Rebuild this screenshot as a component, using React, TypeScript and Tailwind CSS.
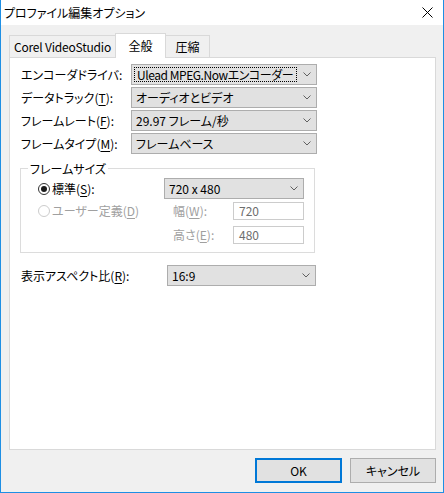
import React from 'react';

const font = "font-['Noto_Sans_CJK_JP','Noto_Sans',sans-serif] [font-feature-settings:'palt']";

const Chevron = () => (
  <svg width="8" height="5" viewBox="0 0 8 5" className="shrink-0">
    <path d="M0.5 0.5 L4 4 L7.5 0.5" fill="none" stroke="#606060" strokeWidth="1" />
  </svg>
);

// accelerator letter, underlined like a Win32 label
const Acc = ({ k }: { k: string }) => (
  <>
    (<span className="underline underline-offset-2">{k}</span>)
  </>
);

const Select = ({
  value,
  width,
  focused,
}: {
  value: string;
  width: string;
  focused?: boolean;
}) => (
  <div
    className={`${width} h-[21px] shrink-0 flex items-center justify-between border border-[#adadad] bg-[#e1e1e1] pr-[5px]`}
  >
    {focused ? (
      <div className="ml-[2px] h-[15px] w-[163px] border border-dotted border-black flex items-center pl-[2px] pt-[1px] leading-none tracking-[-0.45px] whitespace-nowrap overflow-hidden">
        {value}
      </div>
    ) : (
      <span className="pl-[4px] leading-none">{value}</span>
    )}
    <Chevron />
  </div>
);

const Row = ({ label, children }: { label: React.ReactNode; children: React.ReactNode }) => (
  <div className="flex items-center h-[21px] mb-[2px]">
    <div className="w-[110px] shrink-0 leading-none">{label}</div>
    {children}
  </div>
);

const TextBox = ({ value }: { value: string }) => (
  <div className="w-[71px] h-[18px] border border-[#cccccc] bg-white flex items-center pl-[5px] text-[#6d6d6d] leading-none">
    {value}
  </div>
);

export default function App() {
  return (
    <div
      className={`${font} w-[444px] h-[493px] bg-[#f0f0f0] border-x border-b border-[#1e8fe4] text-[12px] text-black flex flex-col overflow-hidden`}
    >
      {/* title bar */}
      <div className="h-[25px] shrink-0 bg-white flex items-center justify-between pl-[3px] pr-[10px]">
        <span className="leading-none">プロファイル編集オプション</span>
        <svg width="11" height="11" viewBox="0 0 11 11">
          <path d="M0.5 0.5 L10.5 10.5 M10.5 0.5 L0.5 10.5" stroke="#000" strokeWidth="1" />
        </svg>
      </div>

      {/* tabs */}
      <div className="flex items-end h-[24px] mt-[8px] ml-[8px]">
        <div className="w-[107px] h-[22px] border border-b-0 border-[#d9d9d9] bg-[#f0f0f0] flex items-center justify-center leading-none pt-[1px] tracking-[-0.2px]">
          Corel VideoStudio
        </div>
        <div className="relative z-10 -mb-px -ml-px w-[51px] h-[25px] border border-b-0 border-[#d9d9d9] bg-white flex items-start justify-center pt-[6px] leading-none">
          全般
        </div>
        <div className="-ml-px w-[45px] h-[22px] border border-b-0 border-[#d9d9d9] bg-[#f0f0f0] flex items-center justify-center leading-none pt-[1px]">
          圧縮
        </div>
      </div>

      {/* panel */}
      <div className="ml-[8px] w-[427px] h-[393px] shrink-0 border border-[#d9d9d9] bg-white pt-[6px] pl-[11px]">
        <Row label="エンコーダドライバ:">
          <Select value="Ulead MPEG.Nowエンコーダー" width="w-[186px]" focused />
        </Row>
        <Row label={<>データトラック<Acc k="T" />:</>}>
          <Select value="オーディオとビデオ" width="w-[186px]" />
        </Row>
        <Row label={<>フレームレート<Acc k="F" />:</>}>
          <Select value="29.97 フレーム/秒" width="w-[186px]" />
        </Row>
        <Row label={<>フレームタイプ<Acc k="M" />:</>}>
          <Select value="フレームベース" width="w-[186px]" />
        </Row>

        {/* group box */}
        <div className="relative mt-[14px] -ml-px w-[295px] h-[85px] border border-[#dcdcdc] pt-[9px] pl-[17px]">
          <span className="absolute left-[7px] -top-[8px] bg-white px-[2px] leading-[16px]">フレームサイズ</span>

          <div className="flex items-center h-[21px]">
            <div className="w-[126px] flex items-center gap-[2px]">
              <span className="w-[12px] h-[12px] rounded-full border border-[#333333] bg-white flex items-center justify-center">
                <span className="w-[6px] h-[6px] rounded-full bg-[#1a1a1a]" />
              </span>
              <span className="leading-none">標準<Acc k="S" />:</span>
            </div>
            <Select value="720 x 480" width="w-[140px]" />
          </div>

          <div className="flex items-center h-[18px] mt-[3px] text-[#a0a0a0]">
            <div className="w-[135px] flex items-center gap-[2px]">
              <span className="w-[12px] h-[12px] rounded-full border border-[#cccccc] bg-white" />
              <span className="leading-none">ユーザー定義<Acc k="D" /></span>
            </div>
            <div className="w-[60px] leading-none">幅<Acc k="W" />:</div>
            <TextBox value="720" />
          </div>

          <div className="flex items-center h-[18px] mt-[6px] text-[#a0a0a0]">
            <div className="w-[135px]" />
            <div className="w-[60px] leading-none">高さ<Acc k="E" />:</div>
            <TextBox value="480" />
          </div>
        </div>

        <div className="flex items-center h-[21px] mt-[12px]">
          <div className="w-[146px] shrink-0 leading-none">表示アスペクト比<Acc k="R" />:</div>
          <Select value="16:9" width="w-[149px]" />
        </div>
      </div>

      {/* buttons */}
      <div className="flex mt-[8px] ml-[254px] gap-[8px]">
        <button className="w-[87px] h-[25px] border-2 border-[#0078d7] bg-[#e1e1e1] leading-none">OK</button>
        <button className="w-[86px] h-[25px] border border-[#adadad] bg-[#e1e1e1] leading-none">キャンセル</button>
      </div>
    </div>
  );
}
